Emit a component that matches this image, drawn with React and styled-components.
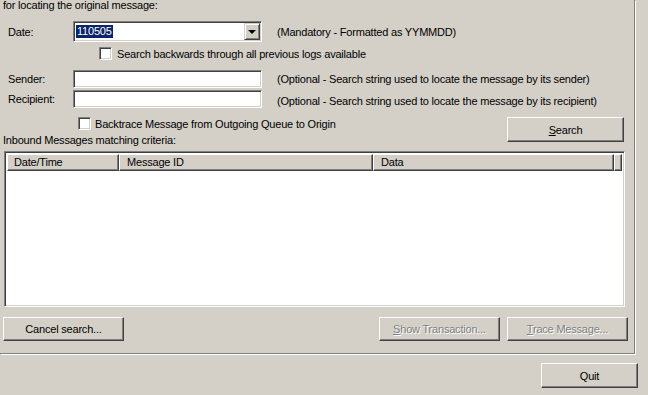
import styled, { createGlobalStyle } from 'styled-components';

const GlobalStyle = createGlobalStyle`
  html, body {
    margin: 0;
    padding: 0;
    background: #d4d0c8;
  }
  body {
    font-family: "Liberation Sans", Arial, sans-serif;
    font-size: 11px;
    letter-spacing: -0.2px;
    color: #000;
  }
`;

const Window = styled.div`
  width: 648px;
  height: 395px;
  overflow: hidden;
  background: #d4d0c8;
  display: flex;
  flex-direction: column;
`;

const GroupBox = styled.div`
  box-sizing: border-box;
  width: 635px;
  height: 354px;
  border-right: 1px solid #808080;
  border-bottom: 1px solid #808080;
  box-shadow: 1px 1px 0 #fff;
  display: flex;
  flex-direction: column;
  flex-shrink: 0;
`;

const Caption = styled.div`
  margin-left: 3px;
  line-height: 13px;
  height: 13px;
  margin-top: -1px;
`;

const FieldRow = styled.div`
  display: grid;
  grid-template-columns: 73px 189px auto;
  align-items: center;
  height: ${p => p.$h}px;
  margin-top: ${p => p.$top}px;
`;

const Label = styled.span`
  padding-left: 8px;
`;

const Hint = styled.span`
  margin-left: 15px;
  white-space: nowrap;
  padding-top: ${p => p.$drop || 0}px;
`;

const Sunken = styled.div`
  box-sizing: border-box;
  border: 1px solid;
  border-color: #808080 #fff #fff #808080;
  box-shadow: inset 1px 1px #404040, inset -1px -1px #d4d0c8;
  background: #fff;
`;

const TextBox = styled(Sunken)`
  height: 18px;
`;

const Combo = styled(Sunken)`
  height: 21px;
  display: flex;
  align-items: stretch;
  padding: 1px;
`;

const ComboValue = styled.div`
  flex: 1;
  display: flex;
  align-items: center;
  padding-left: 1px;
`;

const Selected = styled.span`
  background: #0a246a;
  color: #fff;
  line-height: 13px;
  padding: 0 1px;
`;

const DropButton = styled.div`
  box-sizing: border-box;
  width: 16px;
  border: 1px solid;
  border-color: #d4d0c8 #404040 #404040 #d4d0c8;
  box-shadow: inset 1px 1px #fff, inset -1px -1px #808080;
  background: #d4d0c8;
  display: flex;
  align-items: center;
  justify-content: center;
`;

const Arrow = styled.div`
  width: 0;
  height: 0;
  border-left: 4px solid transparent;
  border-right: 4px solid transparent;
  border-top: 4px solid #000;
  margin-left: -1px;
`;

const CheckRow = styled.label`
  display: flex;
  align-items: center;
  height: 13px;
  padding-left: ${p => p.$indent}px;
  margin-top: ${p => p.$top || 0}px;
  white-space: nowrap;
`;

const CheckBox = styled(Sunken)`
  width: 13px;
  height: 13px;
  flex-shrink: 0;
  margin-right: ${p => p.$gap}px;
`;

const OptionsRow = styled.div`
  display: flex;
  justify-content: space-between;
  align-items: flex-start;
  margin-top: 9px;
`;

const LeftCol = styled.div`
  display: flex;
  flex-direction: column;
`;

const SectionLabel = styled.div`
  margin-left: 3px;
  margin-top: 4px;
  line-height: 13px;
  height: 13px;
`;

const Button = styled.button`
  box-sizing: border-box;
  width: ${p => p.$w}px;
  height: ${p => p.$h || 24}px;
  margin: 0;
  padding: 0;
  font: inherit;
  letter-spacing: inherit;
  background: #d4d0c8;
  border: 1px solid;
  border-color: #fff #404040 #404040 #fff;
  box-shadow: inset -1px -1px #808080, inset 1px 1px #d4d0c8;
  color: ${p => (p.disabled ? '#808080' : '#000')};
  text-shadow: ${p => (p.disabled ? '1px 1px 0 #fff' : 'none')};
  margin-right: ${p => p.$mr || 0}px;
  margin-left: ${p => p.$ml || 0}px;
  flex-shrink: 0;
`;

const ListView = styled(Sunken)`
  margin-top: 4px;
  margin-left: 4px;
  width: 621px;
  height: 156px;
  padding: 2px;
  display: flex;
  flex-direction: column;
`;

const HeaderRow = styled.div`
  display: flex;
  height: 17px;
`;

const HeaderCell = styled.div`
  box-sizing: border-box;
  width: ${p => (p.$w ? `${p.$w}px` : 'auto')};
  flex: ${p => (p.$w ? '0 0 auto' : '1')};
  height: 17px;
  line-height: 15px;
  padding-left: ${p => p.$pad || 6}px;
  border: 1px solid;
  border-color: #fff #404040 #404040 #fff;
  box-shadow: inset -1px -1px #808080;
  background: #d4d0c8;
  white-space: nowrap;
`;

const ActionRow = styled.div`
  display: flex;
  margin-top: 10px;
  padding-left: 3px;
`;

const Spacer = styled.div`
  flex: 1;
`;

const Footer = styled.div`
  display: flex;
  padding-left: 541px;
  margin-top: 9px;
`;

export default function App() {
  return (
    <Window>
      <GlobalStyle />
      <GroupBox>
        <Caption>for locating the original message:</Caption>

        <FieldRow $h={21} $top={9}>
          <Label>Date:</Label>
          <Combo>
            <ComboValue>
              <Selected>110505</Selected>
            </ComboValue>
            <DropButton>
              <Arrow />
            </DropButton>
          </Combo>
          <Hint>(Mandatory - Formatted as YYMMDD)</Hint>
        </FieldRow>

        <CheckRow $indent={99} $top={5}>
          <CheckBox $gap={5} />
          Search backwards through all previous logs available
        </CheckRow>

        <FieldRow $h={18} $top={10}>
          <Label>Sender:</Label>
          <TextBox />
          <Hint>(Optional - Search string used to locate the message by its sender)</Hint>
        </FieldRow>

        <FieldRow $h={18} $top={2}>
          <Label>Recipient:</Label>
          <TextBox />
          <Hint $drop={4}>(Optional - Search string used to locate the message by its recipient)</Hint>
        </FieldRow>

        <OptionsRow>
          <LeftCol>
            <CheckRow $indent={78}>
              <CheckBox $gap={4} />
              Backtrace Message from Outgoing Queue to Origin
            </CheckRow>
            <SectionLabel>Inbound Messages matching criteria:</SectionLabel>
          </LeftCol>
          <Button $w={117} $h={25} $mr={10}>
            <u>S</u>earch
          </Button>
        </OptionsRow>

        <ListView>
          <HeaderRow>
            <HeaderCell $w={112}>Date/Time</HeaderCell>
            <HeaderCell $w={254} $pad={7}>Message ID</HeaderCell>
            <HeaderCell $w={241} $pad={7}>Data</HeaderCell>
            <HeaderCell />
          </HeaderRow>
        </ListView>

        <ActionRow>
          <Button $w={121}>Cancel search...</Button>
          <Spacer />
          <Button $w={121} disabled>
            <u>S</u>how Transaction...
          </Button>
          <Button $w={121} $ml={7} $mr={6} disabled>
            <u>T</u>race Message...
          </Button>
        </ActionRow>
      </GroupBox>

      <Footer>
        <Button $w={97} $h={25}>Quit</Button>
      </Footer>
    </Window>
  );
}
